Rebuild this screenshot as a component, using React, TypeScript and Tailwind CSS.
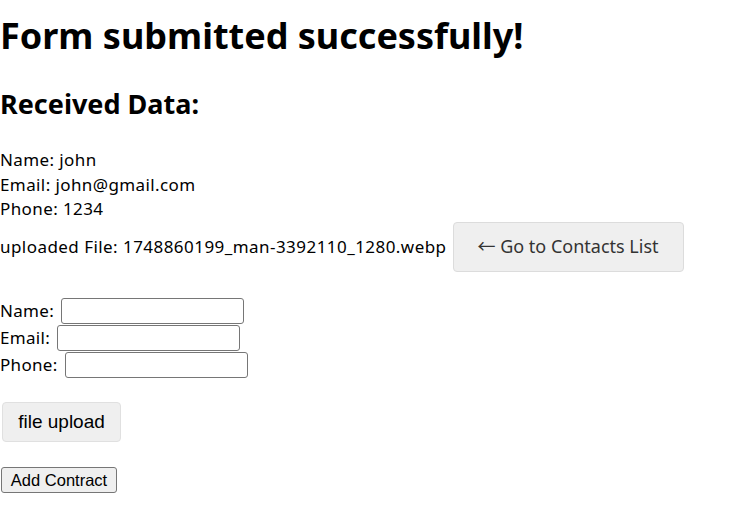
export default function App() {
  const kr = { fontFamily: '"Noto Sans", "Noto Sans CJK KR", sans-serif' };
  return (
    <div className="bg-white text-black w-[752px] h-[507px] overflow-hidden" style={kr}>
      <h1 className="text-[36px] font-bold leading-[44px] pt-[14px] m-0">Form submitted successfully!</h1>
      <h2 className="text-[27px] font-bold leading-[34px] mt-[29px]">Received Data:</h2>
      <div className="mt-[27px] text-[17px] leading-[24.5px] tracking-[0.4px]">
        <p>Name: john</p>
        <p>Email: john@gmail.com</p>
        <p>Phone: 1234</p>
      </div>
      <div className="flex items-center mt-0">
        <p className="text-[17px] leading-[24px] tracking-[0.45px]">uploaded File: 1748860199_man-3392110_1280.webp</p>
        <button className="ml-[6px] w-[231px] h-[50px] bg-[#efefef] border border-[#dcdcdc] rounded-[4px] text-[18px] text-[#333]">
          ← Go to Contacts List
        </button>
      </div>
      <form className="mt-[26px] text-[17px] leading-[26px] tracking-[0.3px]">
        <div className="flex items-end h-[26px]">
          <label>Name:</label>
          <input className="ml-[7px] w-[183px] h-[26px] border border-[#767676] rounded-[3px]" />
        </div>
        <div className="flex items-end h-[27px]">
          <label>Email:</label>
          <input className="ml-[7px] w-[183px] h-[26px] border border-[#767676] rounded-[3px]" />
        </div>
        <div className="flex items-end h-[27px]">
          <label>Phone:</label>
          <input className="ml-[7px] w-[183px] h-[26px] border border-[#767676] rounded-[3px]" />
        </div>
        <button type="button" className="mt-[24px] ml-[2px] w-[119px] h-[40px] bg-[#efefef] border border-[#e0e0e0] rounded-[4px] text-[19px] tracking-normal block" style={{ fontFamily: '"Liberation Sans", Arial, sans-serif' }}>
          file upload
        </button>
        <button type="submit" className="mt-[25px] ml-[1px] w-[116px] h-[26px] bg-[#efefef] border border-[#767676] rounded-[3px] text-[16.5px] leading-[20px] tracking-normal block" style={{ fontFamily: '"Liberation Sans", Arial, sans-serif' }}>
          Add Contract
        </button>
      </form>
    </div>
  );
}
